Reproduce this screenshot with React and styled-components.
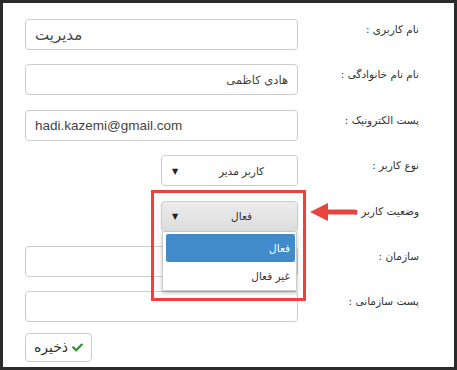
import React from "react";
import styled, { createGlobalStyle } from "styled-components";
import { FaCheck } from "react-icons/fa";

const Global = createGlobalStyle`
  html, body { margin: 0; padding: 0; background: #fff; }
  * { box-sizing: border-box; }
`;

const Frame = styled.div`
  position: relative;
  width: 457px;
  height: 370px;
  border: 3px solid #2b2b2b;
  background: #fff;
  overflow: hidden;
  font-family: "DejaVu Sans", Tahoma, sans-serif;
`;

const Form = styled.form`
  direction: rtl;
  display: flex;
  flex-direction: column;
  gap: 14.4px;
  padding: 16px 35px 0 22px;
`;

const Row = styled.div`
  display: flex;
  align-items: flex-start;
  height: 31px;
`;

const Label = styled.label`
  width: 121px;
  flex: none;
  padding-top: 4px;
  font-size: 10.5px;
  color: #333;
  text-align: right;
`;

const Control = styled.div`
  position: relative;
  width: ${(p) => (p.$narrow ? "137px" : "273px")};
  height: 31px;
`;

const Input = styled.div`
  width: 100%;
  height: 100%;
  border: 1px solid #ccc;
  border-radius: 4px;
  background: #fff;
  display: flex;
  align-items: center;
  justify-content: ${(p) => (p.$left ? "flex-end" : "flex-start")};
  padding: 0 9px;
  direction: ${(p) => (p.$ltr ? "ltr" : "rtl")};
  font-size: ${(p) => p.$size || "11.5px"};
  color: #444;
  font-family: ${(p) =>
    p.$ltr ? '"Liberation Sans", Arial, sans-serif' : '"DejaVu Sans", Tahoma, sans-serif'};
`;

const Select = styled.div`
  width: 100%;
  height: 100%;
  border: 1px solid #ccc;
  border-radius: 4px;
  background: ${(p) => (p.$open ? "linear-gradient(#ececec, #dcdcdc)" : "#fff")};
  display: flex;
  align-items: center;
  justify-content: center;
  padding-left: 24px;
  position: relative;
  font-size: 10.5px;
  color: #333;
  box-shadow: ${(p) => (p.$open ? "0 1px 2px rgba(0,0,0,0.15)" : "none")};
`;

const Caret = styled.span`
  position: absolute;
  left: 10px;
  top: 50%;
  transform: translateY(-50%);
  font-size: 8px;
  color: #222;
`;

const Menu = styled.div`
  position: absolute;
  top: 100%;
  left: 1px;
  right: 1px;
  height: 59px;
  background: #fff;
  border: 1px solid #ccc;
  border-top: none;
  box-shadow: 0 2px 4px rgba(0, 0, 0, 0.25);
  padding: 2px 1px 0 3px;
  z-index: 2;
`;

const Option = styled.div`
  height: 28px;
  display: flex;
  align-items: center;
  padding-right: 5px;
  font-size: 10.5px;
  border-radius: 2px;
  color: ${(p) => (p.$active ? "#fff" : "#333")};
  background: ${(p) => (p.$active ? "#428bca" : "transparent")};
`;

const Button = styled.button`
  direction: rtl;
  margin-top: -4px;
  width: 67px;
  height: 29px;
  border: 1px solid #ccc;
  border-radius: 4px;
  background: #fff;
  display: flex;
  align-items: center;
  justify-content: center;
  gap: 4px;
  padding: 0;
  font-family: "DejaVu Sans", Tahoma, sans-serif;
  font-size: 14px;
  font-weight: normal;
  color: #333;
  align-self: flex-end;
`;

const Highlight = styled.div`
  position: absolute;
  left: 148px;
  top: 187px;
  width: 155px;
  height: 111px;
  border: 3px solid #e8433e;
  pointer-events: none;
  z-index: 3;
`;

const Arrow = styled.svg`
  position: absolute;
  left: 305px;
  top: 197px;
  z-index: 3;
`;

export default function App() {
  return (
    <>
      <Global />
      <Frame>
        <Form>
          <Row>
            <Label>نام کاربری :</Label>
            <Control>
              <Input $size="15px" $left>مدیریت</Input>
            </Control>
          </Row>
          <Row>
            <Label>نام نام خانوادگی :</Label>
            <Control>
              <Input>هادی کاظمی</Input>
            </Control>
          </Row>
          <Row>
            <Label>پست الکترونیک :</Label>
            <Control>
              <Input $ltr $size="13.5px">hadi.kazemi@gmail.com</Input>
            </Control>
          </Row>
          <Row>
            <Label>نوع کاربر :</Label>
            <Control $narrow>
              <Select>
                کاربر مدیر
                <Caret>▼</Caret>
              </Select>
            </Control>
          </Row>
          <Row>
            <Label>وضعیت کاربر :</Label>
            <Control $narrow>
              <Select $open>
                فعال
                <Caret>▼</Caret>
              </Select>
              <Menu>
                <Option $active>فعال</Option>
                <Option>غیر فعال</Option>
              </Menu>
            </Control>
          </Row>
          <Row>
            <Label>سازمان :</Label>
            <Control>
              <Input />
            </Control>
          </Row>
          <Row>
            <Label>پست سازمانی :</Label>
            <Control>
              <Input />
            </Control>
          </Row>
          <Button type="button">
            <FaCheck size={11} color="#2e8f2e" />
            ذخیره
          </Button>
        </Form>
        <Highlight />
        <Arrow width="52" height="24" viewBox="0 0 52 24">
          <path
            d="M2 12 L20 3 L20 9.5 L47 9.5 A2.5 2.5 0 0 1 47 14.5 L20 14.5 L20 21 Z"
            fill="#e8433e"
          />
        </Arrow>
      </Frame>
    </>
  );
}
